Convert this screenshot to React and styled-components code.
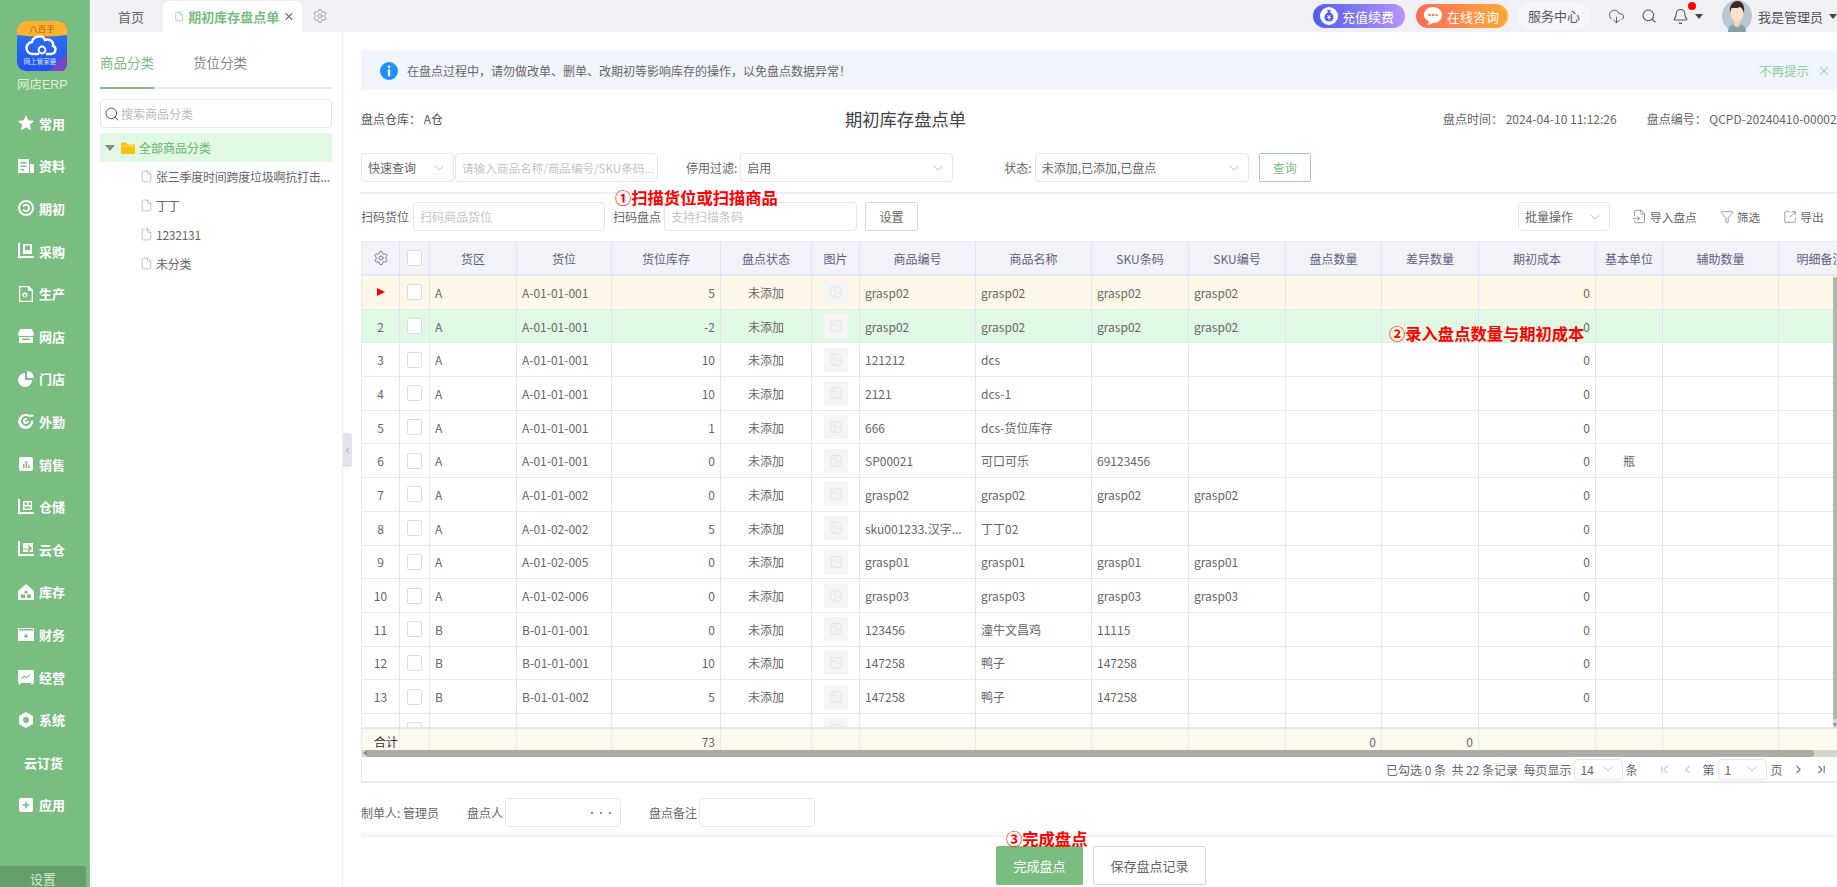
import React from "react";
import styled, { createGlobalStyle } from "styled-components";
import {
  Bell,
  ChevronDown,
  ChevronFirst,
  ChevronLast,
  ChevronLeft,
  ChevronRight,
  CloudDownload,
  File,
  FileInput,
  Filter,
  Image,
  Search,
  Settings,
  SquareArrowOutUpRight,
  X,
} from "lucide-react";

const GREEN = "#7abd80";
const COLS = "38px 30px 87px 95px 109px 91px 48px 116px 116px 97px 97px 96px 97px 117px 67px 116px 84px";

const GlobalStyle = createGlobalStyle`
  html, body, #root { margin: 0; height: 100%; }
  body {
    font-family: "Noto Sans CJK SC", "Noto Sans", sans-serif;
    font-size: 12px;
    color: #666;
    background: #fff;
    overflow: hidden;
  }
  * { box-sizing: border-box; }
`;

const Page = styled.div`
  display: flex;
  height: 100vh;
  overflow: hidden;
`;

const Sidebar = styled.aside`
  width: 90px;
  flex-shrink: 0;
  background: ${GREEN};
  border-right: 1px solid #8cc891;
  display: flex;
  flex-direction: column;
  align-items: stretch;
`;

const LogoWrap = styled.div`
  height: 102px;
  padding: 21px 0 0 17px;
`;

const LogoText = styled.div`
  width: 50px;
  margin-top: 3px;
  text-align: center;
  white-space: nowrap;
  font-size: 12.5px;
  line-height: 17px;
  color: #dcefdd;
  font-family: "Liberation Sans", "Noto Sans CJK SC", sans-serif;
`;

const NavItem = styled.div`
  height: 42.6px;
  display: flex;
  align-items: center;
  gap: 5px;
  padding-left: ${(p) => (p.$plain ? "24px" : "18px")};
  color: #fff;
  font-weight: 700;
  font-size: 13px;
  white-space: nowrap;
`;

const SettingBtn = styled.div`
  margin-top: auto;
  width: 86px;
  height: 21px;
  background: #649f69;
  border-radius: 0 3px 0 0;
  text-align: center;
  line-height: 25px;
  font-size: 13px;
  color: #d5ead6;
`;

const Content = styled.div`
  flex: 1;
  min-width: 0;
  display: flex;
  flex-direction: column;
`;

const TabBar = styled.header`
  height: 32px;
  flex-shrink: 0;
  background: #f0f1f4;
  display: flex;
  align-items: center;
  font-size: 13px;
`;

const HomeTab = styled.div`
  width: 73px;
  padding-left: 28px;
  color: #666;
`;

const ActiveTab = styled.div`
  width: 139px;
  height: 31px;
  margin-top: 1px;
  padding: 0 7px 0 11px;
  background: #fff;
  border-radius: 6px 6px 0 0;
  display: flex;
  align-items: center;
  gap: 4px;
  color: ${GREEN};
  font-weight: 700;
  white-space: nowrap;

  svg:last-child {
    margin-left: auto;
    color: #666;
  }
`;

const TabGear = styled.div`
  margin-left: 10px;
  display: flex;
  color: #8a8a96;
`;

const TopRight = styled.div`
  margin-left: auto;
  display: flex;
  align-items: center;
`;

const Pill = styled.div`
  width: 92px;
  height: 24px;
  margin-right: ${(p) => p.$mr || 11}px;
  padding-left: 7px;
  border-radius: 12px;
  background: ${(p) => p.$bg};
  display: flex;
  align-items: center;
  gap: 4px;
  color: #fff;
  font-size: 13px;
  white-space: nowrap;
`;

const ServiceBtn = styled.div`
  width: 72px;
  height: 26px;
  margin-right: 18px;
  border-radius: 13px;
  background: #f5f6fb;
  border: 1px solid #fafaff;
  text-align: center;
  line-height: 24px;
  font-size: 13px;
  color: #555;
`;

const TopIcon = styled.div`
  display: flex;
  margin-right: ${(p) => p.$mr}px;
  color: #555;
`;

const Caret = styled.div`
  width: 0;
  height: 0;
  border-left: 4px solid transparent;
  border-right: 4px solid transparent;
  border-top: 5px solid #444;
  margin: ${(p) => p.$m || 0};
`;

const BellDot = styled.div`
  position: absolute;
  top: -6px;
  right: -7px;
  width: 8px;
  height: 8px;
  border-radius: 50%;
  background: #f00;
`;

const BellWrap = styled.div`
  position: relative;
  display: flex;
  color: #555;
  margin-right: 6px;
`;

const UserName = styled.div`
  margin-left: 6px;
  font-size: 13px;
  color: #555;
  white-space: nowrap;
`;

const Body = styled.div`
  flex: 1;
  min-height: 0;
  display: flex;
  position: relative;
`;

const LeftPanel = styled.div`
  width: 253px;
  flex-shrink: 0;
  padding: 9px 10px 0;
  border-right: 1px solid #ededf3;
`;

const LeftTabs = styled.div`
  height: 48px;
  display: flex;
  gap: 39px;
  border-bottom: 2px solid #e8e9ec;
`;

const LeftTab = styled.div`
  height: 48px;
  line-height: 42px;
  font-size: 13.5px;
  color: ${(p) => (p.$active ? GREEN : "#888")};
  border-bottom: 2px solid ${(p) => (p.$active ? GREEN : "transparent")};
`;

const TreeSearch = styled.div`
  height: 29px;
  margin-top: 10px;
  padding-left: 3px;
  border: 1px solid #e6e6e6;
  border-radius: 4px;
  display: flex;
  align-items: center;
  gap: 1px;
  color: #bbb;
  font-size: 12px;
  svg { color: #555; }
`;

const TreeRoot = styled.div`
  height: 29px;
  margin-top: 5px;
  padding-left: 5px;
  background: #e1f9e3;
  display: flex;
  align-items: center;
  color: ${GREEN};
  font-weight: 500;
`;

const TreeCaret = styled.div`
  width: 0;
  height: 0;
  border-left: 5px solid transparent;
  border-right: 5px solid transparent;
  border-top: 6px solid #888;
  margin-right: 6px;
`;

const TreeItem = styled.div`
  height: 29px;
  padding-left: 40px;
  display: flex;
  align-items: center;
  gap: 3px;
  white-space: nowrap;
  letter-spacing: -0.25px;
  color: #666;
  svg { color: #aaa; flex-shrink: 0; }
`;

const Handle = styled.div`
  position: absolute;
  left: 253px;
  top: 401px;
  width: 9px;
  height: 34px;
  background: #e1e4ea;
  border-radius: 0 3px 3px 0;
  display: flex;
  align-items: center;
  justify-content: center;
  color: #888;
`;

const Main = styled.main`
  flex: 1;
  min-width: 0;
  padding: 19px 0 0 18px;
  overflow: hidden;
`;

const InfoBar = styled.div`
  height: 39px;
  padding: 0 6px 0 19px;
  background: #f0f4fd;
  display: flex;
  align-items: center;
  color: #666;
`;

const InfoText = styled.div`
  margin-left: 9px;
`;

const InfoClose = styled.div`
  margin-left: auto;
  display: flex;
  align-items: center;
  gap: 8px;
  font-size: 12.5px;
  color: #8fcf95;
`;

const HeadRow = styled.div`
  height: 56px;
  display: flex;
  align-items: center;
  white-space: nowrap;
`;

const HeadLeft = styled.div`
  width: 484px;
  color: #555;
`;

const HeadTitle = styled.div`
  width: 121px;
  font-size: 17.300px;
  color: #444;
`;

const HeadMeta = styled.div`
  margin-left: ${(p) => p.$ml}px;
  color: #666;
`;

const FilterRow = styled.div`
  margin-top: 7px;
  padding-bottom: 10px;
  border-bottom: 2px solid #eef0f6;
  display: flex;
  align-items: center;
`;

const ScanRow = styled.div`
  margin-top: 8px;
  display: flex;
  align-items: center;
  position: relative;
`;

const Label = styled.div`
  margin: 0 ${(p) => p.$mr ?? 4}px 0 ${(p) => p.$ml || 0}px;
  color: #666;
  white-space: nowrap;
`;

const Field = styled.div`
  width: ${(p) => p.$w}px;
  height: ${(p) => p.$h || 29}px;
  flex-shrink: 0;
  margin-left: ${(p) => p.$ml || 0}px;
  padding: 0 6px;
  border: 1px solid #e6e6e6;
  border-radius: ${(p) => p.$r ?? 4}px;
  background: #fff;
  display: flex;
  align-items: center;
  justify-content: space-between;
  white-space: nowrap;
  overflow: hidden;
  font-size: ${(p) => p.$fs || 12}px;
  color: ${(p) => (p.$ph ? "#c4c4c4" : "#666")};
  svg { color: #aaa; flex-shrink: 0; }
`;

const MoreDots = styled.span`
  font-size: 10px;
  letter-spacing: -1px;
  color: #777;
`;

const Btn = styled.div`
  width: ${(p) => p.$w}px;
  height: ${(p) => p.$h || 29}px;
  margin-left: ${(p) => p.$ml || 0}px;
  border: 1px solid ${(p) => (p.$green ? "#9fd3a4" : "#d8d8d8")};
  border-radius: 2px;
  display: flex;
  align-items: center;
  justify-content: center;
  color: ${(p) => (p.$green ? GREEN : "#666")};
  font-size: 12px;
  flex-shrink: 0;
`;

const Action = styled.div`
  margin-left: ${(p) => p.$ml}px;
  display: flex;
  align-items: center;
  gap: 3px;
  white-space: nowrap;
  font-size: 11.700px;
  color: #666;
  svg { color: #777; }
`;

const Annotation = styled.div`
  position: absolute;
  left: ${(p) => p.$left}px;
  top: ${(p) => p.$top}px;
  font-size: 16.300px;
  line-height: 20px;
  font-weight: 700;
  color: #f00;
  white-space: nowrap;
  z-index: 5;
`;

const TableBox = styled.div`
  height: 542px;
  margin-top: 10px;
  border: 1px solid #e8e9f1;
  border-right: 0;
  border-bottom-width: 2px;
  display: flex;
  flex-direction: column;
  position: relative;
  overflow: hidden;
`;

const Row = styled.div`
  display: grid;
  grid-template-columns: ${COLS};
  width: 1502px;
  flex-shrink: 0;
`;

const HeadCells = styled(Row)`
  height: 34px;
  background: #f2f3f9;
  border-bottom: 2px solid #e6e7f0;
`;

const HeadCell = styled.div`
  display: flex;
  align-items: center;
  justify-content: center;
  border-right: 1px solid #e2e3ee;
  color: #5f6080;
  white-space: nowrap;
`;

const Rows = styled.div`
  height: 451px;
  flex-shrink: 0;
  overflow: hidden;
`;

const DataRow = styled(Row)`
  height: 33.700px;
  background: ${(p) => p.$bg || "#fff"};
  border-bottom: 1.500px solid #e6e7f0;
`;

const Cell = styled.div`
  display: flex;
  align-items: center;
  justify-content: ${(p) => (p.$align === "right" ? "flex-end" : p.$align === "center" ? "center" : "flex-start")};
  padding: 0 5px;
  border-right: 1px solid #e4e5ef;
  color: #666;
  white-space: nowrap;
  overflow: hidden;
`;

const Check = styled.div`
  width: 15px;
  height: 16px;
  background: #fff;
  border: 1px solid #dcdcdc;
  border-radius: 2px;
`;

const Thumb = styled.div`
  width: 24px;
  height: 24px;
  background: #f5f5f5;
  display: flex;
  align-items: center;
  justify-content: center;
  color: #ddd;
`;

const Arrow = styled.div`
  width: 0;
  height: 0;
  border-top: 4px solid transparent;
  border-bottom: 4px solid transparent;
  border-left: 8px solid #f00;
`;

const SumWrap = styled.div`
  height: 30px;
  flex-shrink: 0;
  position: relative;
  border-top: 2px solid #e6e7ee;
`;

const SumRow = styled(Row)`
  height: 28px;
  background: #fefaf0;
`;

const SumCell = styled(Cell)`
  border-right-color: #ebebe8;
  padding-bottom: 4px;
`;

const SumLabel = styled(SumCell)`
  padding-left: 12px;
  overflow: visible;
  color: #333;
`;

const HBar = styled.div`
  position: absolute;
  left: 0;
  right: 0;
  bottom: 0;
  height: 7px;
  background: rgba(205, 205, 198, 0.8);

  &::before {
    content: "";
    position: absolute;
    left: 1px;
    top: 0;
    border-top: 3.500px solid transparent;
    border-bottom: 3.500px solid transparent;
    border-right: 4px solid #8a8b84;
  }
`;

const HThumb = styled.div`
  margin-left: 5px;
  width: 1447px;
  height: 100%;
  background: rgba(155, 156, 148, 0.72);
  border-radius: 0 3px 3px 0;
`;

const VBar = styled.div`
  position: absolute;
  right: 0;
  top: 35px;
  width: 4px;
  height: 451px;
  background: #dcdcd6;

  &::after {
    content: "";
    position: absolute;
    left: 0;
    bottom: 1px;
    border-left: 2px solid transparent;
    border-right: 2px solid transparent;
    border-top: 4px solid #8a8b84;
  }
`;

const VThumb = styled.div`
  height: 442px;
  background: #b4b5ae;
`;

const Pager = styled.div`
  flex: 1;
  display: flex;
  align-items: center;
  padding-left: 1024px;
  white-space: nowrap;
  color: #666;
`;

const PagerIcon = styled.div`
  display: flex;
  margin-left: ${(p) => p.$ml}px;
  color: ${(p) => (p.$dim ? "#ccc" : "#777")};
`;

const FootRow = styled.div`
  margin-top: 15px;
  display: flex;
  align-items: center;
`;

const Band = styled.div`
  height: 5px;
  margin-top: 5px;
  background: linear-gradient(180deg, #fff, #f0f0f0);
`;

const ActionRow = styled.div`
  margin-top: 9px;
  padding-left: 4px;
  display: flex;
  justify-content: center;
  gap: 10px;
  position: relative;
`;

const DoneBtn = styled.div`
  width: 87px;
  height: 39px;
  background: ${GREEN};
  border-radius: 2px;
  color: #fff;
  font-size: 13px;
  display: flex;
  align-items: center;
  justify-content: center;
`;

const SaveBtn = styled(DoneBtn)`
  width: 113px;
  background: #fff;
  border: 1px solid #d8d8d8;
  color: #666;
`;

const LogoIcon = () => (
  <svg width="50" height="50" viewBox="0 0 50 50">
    <defs>
      <linearGradient id="logoBlue" x1="0" y1="0" x2="0" y2="1">
        <stop offset="0" stopColor="#2f7bf6" />
        <stop offset="1" stopColor="#2450f0" />
      </linearGradient>
    </defs>
    <rect width="50" height="50" rx="9" fill="url(#logoBlue)" />
    <path d="M0 14V9a9 9 0 0 1 9-9h32a9 9 0 0 1 9 9v5q-25 3-50 0z" fill="#fdb22c" />
    <path d="M46 50H32l18-18v9a9 9 0 0 1-4 9z" fill="#7a46c8" />
    <text x="25" y="11" textAnchor="middle" fontSize="8.5" fill="#a5601a" fontFamily="Noto Sans CJK SC">八百手</text>
    <path d="M16 33a6 6 0 0 1-1-12c1-6 11-8 13-2 5-2 9 2 8 6 4 1 3 8-2 8h-4M21 33h-3" fill="none" stroke="#fff" strokeWidth="2.4" strokeLinecap="round" />
    <circle cx="25" cy="29" r="3.400" fill="none" stroke="#fff" strokeWidth="2" />
    <text x="23" y="43" textAnchor="middle" fontSize="6.500" fill="#dfe8ff" fontFamily="Noto Sans CJK SC">网上管家婆</text>
  </svg>
);

const nav = [
  { label: "常用", icon: <path d="M8 0l2.400 5.200 5.600.7-4.100 3.800 1.100 5.600L8 12.500l-5 2.800 1.100-5.600L0 5.900l5.600-.7z" /> },
  { label: "资料", icon: <><path fillRule="evenodd" d="M0 1h11v14H0zM2.500 4v1.500h6V4zM2.500 7.500V9h6V7.500zM2.500 11v1.500h4V11z" /><path d="M12 6h4v9h-4z" /></> },
  { label: "期初", icon: <path fillRule="evenodd" d="M8 0a8 8 0 1 1 0 16A8 8 0 0 1 8 0zm0 2a6 6 0 1 0 0 12A6 6 0 0 0 8 2zm0 2a4 4 0 1 1-3.500 6l1.600-.9A2.200 2.200 0 1 0 8 5.800a2.200 2.200 0 0 0-2 1.200L4.300 6A4 4 0 0 1 8 4z" /> },
  { label: "采购", icon: <path d="M0 0h2v13h14v2H3l-1 1-1-1H0zM5 1h9v10H5zm2 1.500V7h5V2.500z" fillRule="evenodd" /> },
  { label: "生产", icon: <path fillRule="evenodd" d="M1 0h10l4 4v12H1zm1.300 1.300v13.400h11.400V5H10V1.300zM8 6.500l1.500.8V9a2.500 2.500 0 1 1-1.500-2.500zM7 8.200a1.200 1.200 0 1 0 0 2.400 1.200 1.200 0 0 0 0-2.400z" /> },
  { label: "网店", icon: <path fillRule="evenodd" d="M2 1h12l2 5a2 2 0 0 1-2 2H2a2 2 0 0 1-2-2zM1 9h14v6H1zm3 1.500v1.500h8v-1.500z" /> },
  { label: "门店", icon: <><path d="M7 2v7h7a7 7 0 1 1-7-7z" /><path d="M9 0a7 7 0 0 1 7 7H9z" /></> },
  { label: "外勤", icon: <path fillRule="evenodd" d="M8 1a7 7 0 0 1 3 .7l-.5 2A5 5 0 1 0 13 8l2-.500A7.500 7.500 0 1 1 8 1zm0 4a3 3 0 0 1 1 .2L8.500 7A1 1 0 1 0 9.300 8L11 7.500A3 3 0 1 1 8 5zM12 0l.5 2 2-.5L16 3l-3 1-2 .500z" /> },
  { label: "销售", icon: <path fillRule="evenodd" d="M3 1h10a2 2 0 0 1 2 2v10a2 2 0 0 1-2 2H3a2 2 0 0 1-2-2V3a2 2 0 0 1 2-2zm2 7v4h1.500V8zm2.500-3v7H9V5zM10 9v3h1.500V9z" /> },
  { label: "仓储", icon: <path fillRule="evenodd" d="M0 0h2v13h14v2H3l-1 1-1-1H0zM5 2h9v9H5zm1.500 1.500v2.500h2.500V3.500zm0 4v2h6v-2zm4-4v2.500H13V3.500z" /> },
  { label: "云仓", icon: <path fillRule="evenodd" d="M0 0h2v13h14v2H3l-1 1-1-1H0zM5 2h10v9H5V8.500h6.500L9.500 10.500 10.500 11.500 14 7.500 10.500 4 9.500 5l2 2.500H5z" /> },
  { label: "库存", icon: <path fillRule="evenodd" d="M8 0l8 7v9H0V7zM6.500 7v2.500h3V7zM3 10.500V14h4v-3.500zm6 0V14h4v-3.500z" /> },
  { label: "财务", icon: <path fillRule="evenodd" d="M0 2h16v13H0zm1 1v1.500h14V3zm6 5l-.8.800 1 1.200H6v1h1.500v1.500h1V11H10v-1H8.800l1-1.200L9 8 8 9.200z" /> },
  { label: "经营", icon: <path fillRule="evenodd" d="M0 1h16v13l-2 2-1-2H3l-1 2-2-2zm3 8.500l.8.800 2.700-2.500 2 1.700 3.700-3.500-.8-.8L8.500 8 6.500 6.300z" /> },
  { label: "系统", icon: <path fillRule="evenodd" d="M8 0l7 4v8l-7 4-7-4V4zm0 5a3 3 0 1 0 0 6 3 3 0 0 0 0-6z" /> },
  { label: "云订货", plain: true },
  { label: "应用", icon: <path fillRule="evenodd" d="M3 1h10a2 2 0 0 1 2 2v10a2 2 0 0 1-2 2H3a2 2 0 0 1-2-2V3a2 2 0 0 1 2-2zm4.300 3.500v2.800H4.500v1.400h2.800v2.800h1.400V8.700h2.800V7.300H8.700V4.500z" /> },
];

const InfoIcon = () => (
  <svg width="18" height="18" viewBox="0 0 18 18">
    <circle cx="9" cy="9" r="9" fill="#1e90ff" />
    <circle cx="9" cy="4.800" r="1.400" fill="#fff" />
    <rect x="7.800" y="7.300" width="2.400" height="7" rx="1" fill="#fff" />
  </svg>
);

const FolderIcon = () => (
  <svg width="14" height="14" viewBox="0 0 14 14" style={{ marginRight: 4 }}>
    <path d="M0 1.500h5l1.500 2H14V13H0z" fill="#ffc107" />
    <path d="M0 4.500h14v1H0z" fill="#ffdf7a" />
  </svg>
);

const PurseIcon = () => (
  <svg width="18" height="18" viewBox="0 0 18 18">
    <circle cx="9" cy="9" r="9" fill="#fff" />
    <path d="M7 3h4l-1 2.200c2.500 1 3.500 3 3.500 5 0 3-2 4.300-4.500 4.300S4.500 13.200 4.500 10.200c0-2 1-4 3.500-5z" fill="#4f5cf0" />
    <path d="M7.500 8l1.500 2 1.500-2M6.800 10.500h4.400M9 10v3" stroke="#fff" strokeWidth=".9" fill="none" />
  </svg>
);

const ChatIcon = () => (
  <svg width="20" height="18" viewBox="0 0 20 18">
    <path d="M10 0c5 0 9 3.400 9 8s-4 8-9 8l-5 2 1-3.400C3 13 1 10.800 1 8c0-4.600 4-8 9-8z" fill="#fff" />
    <circle cx="6.500" cy="8" r="1.300" fill="#ff7a4d" />
    <circle cx="10" cy="8" r="1.300" fill="#ff7a4d" />
    <circle cx="13.500" cy="8" r="1.300" fill="#ff7a4d" />
  </svg>
);

const Avatar = () => (
  <svg width="30" height="32" viewBox="0 0 30 32">
    <ellipse cx="15" cy="16" rx="15" ry="16" fill="#b9c6d4" />
    <path d="M6 32c0-6 4-8 9-8s9 2 9 8z" fill="#7ea3a8" />
    <rect x="12" y="20" width="6" height="7" rx="3" fill="#f4d3b8" />
    <ellipse cx="15" cy="13.500" rx="6.500" ry="8.500" fill="#fbe0cb" />
    <path d="M8 13C7 5 11 1 15.500 1S23 5 22 13c-1-3-2-5-4-6-3 1.500-7 1-8.500 1C9 9 8.500 11 8 13z" fill="#3a2a22" />
  </svg>
);

const SelectField = ({ w, children, ml, h }) => (
  <Field $w={w} $ml={ml} $h={h}>
    <span>{children}</span>
    <ChevronDown size={16} strokeWidth={1} />
  </Field>
);

const headers = ["货区", "货位", "货位库存", "盘点状态", "图片", "商品编号", "商品名称", "SKU条码", "SKU编号", "盘点数量", "差异数量", "期初成本", "基本单位", "辅助数量", "明细备注"];

const g2 = "grasp02";
const rows = [
  { z: "A", loc: "A-01-01-001", qty: 5, code: g2, name: g2, sku: g2, skuNo: g2, bg: "#fef8e8" },
  { z: "A", loc: "A-01-01-001", qty: -2, code: g2, name: g2, sku: g2, skuNo: g2, bg: "#e0f9e4" },
  { z: "A", loc: "A-01-01-001", qty: 10, code: "121212", name: "dcs" },
  { z: "A", loc: "A-01-01-001", qty: 10, code: "2121", name: "dcs-1" },
  { z: "A", loc: "A-01-01-001", qty: 1, code: "666", name: "dcs-货位库存" },
  { z: "A", loc: "A-01-01-001", qty: 0, code: "SP00021", name: "可口可乐", sku: "69123456", unit: "瓶" },
  { z: "A", loc: "A-01-01-002", qty: 0, code: g2, name: g2, sku: g2, skuNo: g2 },
  { z: "A", loc: "A-01-02-002", qty: 5, code: "sku001233.汉字...", name: "丁丁02" },
  { z: "A", loc: "A-01-02-005", qty: 0, code: "grasp01", name: "grasp01", sku: "grasp01", skuNo: "grasp01" },
  { z: "A", loc: "A-01-02-006", qty: 0, code: "grasp03", name: "grasp03", sku: "grasp03", skuNo: "grasp03" },
  { z: "B", loc: "B-01-01-001", qty: 0, code: "123456", name: "潼牛文昌鸡", sku: "11115" },
  { z: "B", loc: "B-01-01-001", qty: 10, code: "147258", name: "鸭子", sku: "147258" },
  { z: "B", loc: "B-01-01-002", qty: 5, code: "147258", name: "鸭子", sku: "147258" },
];

const PlaceholderThumb = () => (
  <Thumb>
    <Image size={14} strokeWidth={1.2} />
  </Thumb>
);

export default function App() {
  return (
    <Page>
      <GlobalStyle />
      <Sidebar>
        <LogoWrap>
          <LogoIcon />
          <LogoText>网店ERP</LogoText>
        </LogoWrap>
        {nav.map((item) => (
          <NavItem key={item.label} $plain={item.plain}>
            {item.icon && (
              <svg width="16" height="16" viewBox="0 0 16 16" fill="#fff">
                {item.icon}
              </svg>
            )}
            {item.label}
          </NavItem>
        ))}
        <SettingBtn>设置</SettingBtn>
      </Sidebar>

      <Content>
        <TabBar>
          <HomeTab>首页</HomeTab>
          <ActiveTab>
            <File size={13} strokeWidth={1.4} />
            期初库存盘点单
            <X size={15} strokeWidth={2.4} />
          </ActiveTab>
          <TabGear>
            <Settings size={16} strokeWidth={1.2} />
          </TabGear>
          <TopRight>
            <Pill $bg="linear-gradient(90deg, #4f5cf0, #b794fb)">
              <PurseIcon />
              充值续费
            </Pill>
            <Pill $bg="linear-gradient(90deg, #ff6b5a, #ffa93a)" $mr={10}>
              <ChatIcon />
              在线咨询
            </Pill>
            <ServiceBtn>服务中心</ServiceBtn>
            <TopIcon $mr={16}>
              <CloudDownload size={17} strokeWidth={1.3} />
            </TopIcon>
            <TopIcon $mr={15}>
              <Search size={16} strokeWidth={1.6} />
            </TopIcon>
            <BellWrap>
              <Bell size={17} strokeWidth={1.5} />
              <BellDot />
            </BellWrap>
            <Caret $m="0 19px 0 0" />
            <Avatar />
            <UserName>我是管理员</UserName>
            <Caret $m="0 0 0 6px" />
          </TopRight>
        </TabBar>

        <Body>
          <LeftPanel>
            <LeftTabs>
              <LeftTab $active>商品分类</LeftTab>
              <LeftTab>货位分类</LeftTab>
            </LeftTabs>
            <TreeSearch>
              <Search size={16} strokeWidth={1.5} />
              搜索商品分类
            </TreeSearch>
            <TreeRoot>
              <TreeCaret />
              <FolderIcon />
              全部商品分类
            </TreeRoot>
            {["张三季度时间跨度垃圾啊抗打击...", "丁丁", "1232131", "未分类"].map((t) => (
              <TreeItem key={t}>
                <File size={13} strokeWidth={1.3} />
                {t}
              </TreeItem>
            ))}
          </LeftPanel>
          <Handle>
            <ChevronLeft size={9} strokeWidth={2} />
          </Handle>

          <Main>
            <InfoBar>
              <InfoIcon />
              <InfoText>在盘点过程中，请勿做改单、删单、改期初等影响库存的操作，以免盘点数据异常！</InfoText>
              <InfoClose>
                不再提示
                <X size={14} strokeWidth={1.8} />
              </InfoClose>
            </InfoBar>

            <HeadRow>
              <HeadLeft>盘点仓库：&nbsp;A仓</HeadLeft>
              <HeadTitle>期初库存盘点单</HeadTitle>
              <HeadMeta $ml={477}>盘点时间：&nbsp;2024-04-10 11:12:26</HeadMeta>
              <HeadMeta $ml={30}>盘点编号：&nbsp;QCPD-20240410-00002</HeadMeta>
            </HeadRow>

            <FilterRow>
              <SelectField w={93}>快速查询</SelectField>
              <Field $w={203} $ml={1} $ph $fs={11.6}>请输入商品名称/商品编号/SKU条码...</Field>
              <Label $ml={28} $mr={3}>停用过滤:</Label>
              <SelectField w={213}>启用</SelectField>
              <Label $ml={51} $mr={3}>状态:</Label>
              <SelectField w={214}>未添加,已添加,已盘点</SelectField>
              <Btn $w={52} $ml={10} $green>查询</Btn>
            </FilterRow>

            <ScanRow>
              <Label>扫码货位</Label>
              <Field $w={192} $ph>扫码商品货位</Field>
              <Label $ml={8} $mr={3}>扫码盘点</Label>
              <Field $w={193} $ph>支持扫描条码</Field>
              <Btn $w={53} $ml={8}>设置</Btn>
              <Annotation $left={254} $top={-15}>①扫描货位或扫描商品</Annotation>
              <SelectField w={92} ml={600}>批量操作</SelectField>
              <Action $ml={22}>
                <FileInput size={15} strokeWidth={1.2} />
                导入盘点
              </Action>
              <Action $ml={23}>
                <Filter size={14} strokeWidth={1.2} />
                筛选
              </Action>
              <Action $ml={23}>
                <SquareArrowOutUpRight size={14} strokeWidth={1.2} />
                导出
              </Action>
            </ScanRow>

            <TableBox>
              <HeadCells>
                <HeadCell>
                  <Settings size={16} strokeWidth={1.2} />
                </HeadCell>
                <HeadCell>
                  <Check />
                </HeadCell>
                {headers.map((h) => (
                  <HeadCell key={h}>{h}</HeadCell>
                ))}
              </HeadCells>
              <Rows>
                {rows.map((r, i) => (
                  <DataRow key={i} $bg={r.bg}>
                    <Cell $align="center">{i === 0 ? <Arrow /> : i + 1}</Cell>
                    <Cell $align="center"><Check /></Cell>
                    <Cell>{r.z}</Cell>
                    <Cell>{r.loc}</Cell>
                    <Cell $align="right">{r.qty}</Cell>
                    <Cell $align="center">未添加</Cell>
                    <Cell $align="center"><PlaceholderThumb /></Cell>
                    <Cell>{r.code}</Cell>
                    <Cell>{r.name}</Cell>
                    <Cell>{r.sku}</Cell>
                    <Cell>{r.skuNo}</Cell>
                    <Cell />
                    <Cell />
                    <Cell $align="right">0</Cell>
                    <Cell $align="center">{r.unit}</Cell>
                    <Cell />
                    <Cell />
                  </DataRow>
                ))}
                <DataRow>
                  <Cell />
                  <Cell $align="center"><Check /></Cell>
                  {Array.from({ length: 4 }, (_, i) => <Cell key={i} />)}
                  <Cell $align="center"><PlaceholderThumb /></Cell>
                  {Array.from({ length: 10 }, (_, i) => <Cell key={i} />)}
                </DataRow>
              </Rows>
              <SumWrap>
                <SumRow>
                  <SumLabel>合计</SumLabel>
                  <SumCell />
                  <SumCell />
                  <SumCell />
                  <SumCell $align="right">73</SumCell>
                  {Array.from({ length: 4 }, (_, i) => <SumCell key={i} />)}
                  <SumCell />
                  <SumCell />
                  <SumCell $align="right">0</SumCell>
                  <SumCell $align="right">0</SumCell>
                  <SumCell />
                  <SumCell />
                  <SumCell />
                  <SumCell />
                </SumRow>
                <HBar>
                  <HThumb />
                </HBar>
              </SumWrap>
              <VBar>
                <VThumb />
              </VBar>
              <Annotation $left={1027} $top={81}>②录入盘点数量与期初成本</Annotation>
              <Pager>
                已勾选 0 条 &nbsp;共 22 条记录 &nbsp;每页显示
                <SelectField w={49} ml={2} h={21}>14</SelectField>
                <Label $ml={3} $mr={0}>条</Label>
                <PagerIcon $ml={20} $dim><ChevronFirst size={13} /></PagerIcon>
                <PagerIcon $ml={10} $dim><ChevronLeft size={13} /></PagerIcon>
                <Label $ml={9} $mr={3}>第</Label>
                <SelectField w={49} h={21}>1</SelectField>
                <Label $ml={4} $mr={0}>页</Label>
                <PagerIcon $ml={9}><ChevronRight size={13} /></PagerIcon>
                <PagerIcon $ml={10}><ChevronLast size={13} /></PagerIcon>
              </Pager>
            </TableBox>

            <FootRow>
              <Label $mr={0}>制单人: 管理员</Label>
              <Label $ml={28} $mr={2}>盘点人</Label>
              <Field $w={116}>
                <span />
                <MoreDots>•••</MoreDots>
              </Field>
              <Label $ml={28} $mr={2}>盘点备注</Label>
              <Field $w={116} />
            </FootRow>
            <Band />

            <ActionRow>
              <Annotation $left={645} $top={-18}>③完成盘点</Annotation>
              <DoneBtn>完成盘点</DoneBtn>
              <SaveBtn>保存盘点记录</SaveBtn>
            </ActionRow>
          </Main>
        </Body>
      </Content>
    </Page>
  );
}
